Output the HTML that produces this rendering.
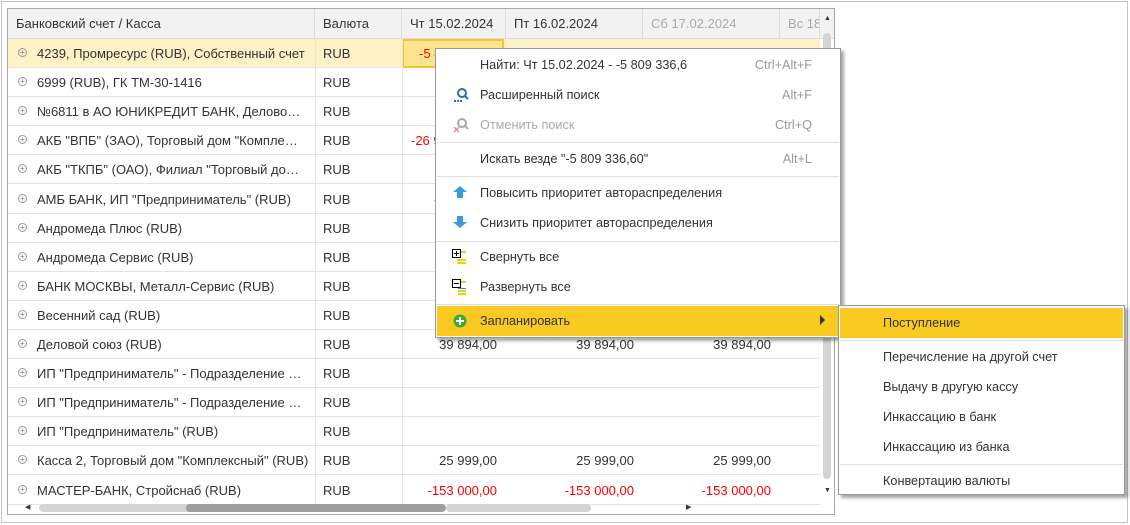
<!DOCTYPE html>
<html><head><meta charset="utf-8"><style>
*{box-sizing:border-box;margin:0;padding:0}
body{width:1130px;height:525px;background:#fff;font-family:"Liberation Sans",sans-serif;font-size:13px;color:#333;position:relative;overflow:hidden}
.abs{position:absolute}
.outer{left:1px;top:1px;width:1127px;height:522px;border:1px solid #c4c4c4}
.tbl{left:7px;top:8px;width:828px;height:507px;border:1px solid #a8a8a8;overflow:hidden;background:#fff}
.hdr{left:0;top:0;height:30px;width:826px;background:#f2f2f2;border-bottom:1px solid #ddd}
.hc{position:absolute;top:0;height:30px;line-height:29px;padding-left:8px;border-right:1px solid #ddd;white-space:nowrap;overflow:hidden}
.row{position:absolute;left:0;width:812px;height:29px;border-bottom:1px solid #e4e4e4}
.c{position:absolute;top:0;height:29px;line-height:29px;white-space:nowrap;overflow:hidden}
.vl{position:absolute;top:30px;width:1px;height:467px;background:#e4e4e4}
.n{text-align:right;width:100px}
.red{color:#f00}
.pl{position:absolute;left:10px;top:9px;width:9px;height:9px;border:1px solid #999;border-radius:50%;font-size:8px;line-height:7px;text-align:center;color:#777}
.menu{background:#fff;border:1px solid #9a9a9a;box-shadow:3px 3px 3px rgba(0,0,0,.35);font-size:12.7px}
.mi{position:absolute;left:0;height:30px;line-height:30px;white-space:nowrap}
.sep{position:absolute;height:1px;background:#ddd}
.sc{position:absolute;color:#999}
</style></head><body>
<div class="abs outer"></div>
<div class="abs tbl">
 <div class="abs hdr">
  <div class="hc" style="left:0;width:307px">Банковский счет / Касса</div>
  <div class="hc" style="left:307px;width:87px">Валюта</div>
  <div class="hc" style="left:394px;width:104px">Чт 15.02.2024</div>
  <div class="hc" style="left:498px;width:137px">Пт 16.02.2024</div>
  <div class="hc" style="left:635px;width:137px;color:#aaa">Сб 17.02.2024</div>
  <div class="hc" style="left:772px;width:40px;color:#aaa">Вс 18.02.2024</div>
 </div>
 <div id="rows"></div>
 <div class="vl" style="left:307px"></div><div class="vl" style="left:394px"></div>
 <div class="abs" style="left:816px;top:6px;font-size:7px;color:#333">▲</div>
 <div class="abs" style="left:815px;top:24px;width:8px;height:446px;background:#d4d4d4;border-radius:4px"></div>
 <div class="abs" style="left:816px;top:478px;font-size:7px;color:#333">▼</div>
 <div class="abs" style="left:17px;top:494px;font-size:7px;color:#333">◀</div>
 <div class="abs" style="left:31px;top:495px;width:260px;height:8px;background:#d4d4d4;border-radius:4px"></div>
 <div class="abs" style="left:178px;top:495px;width:260px;height:8px;background:#9e9e9e;border-radius:4px"></div>
 <div class="abs" style="left:438px;top:495px;width:145px;height:8px;background:#d4d4d4;border-radius:4px"></div>
 <div class="abs" style="left:678px;top:494px;font-size:7px;color:#333">▶</div>
</div>

<div class="abs menu" style="left:435px;top:48px;width:406px;height:290px">
 <div class="mi" style="top:1px;left:44px">Найти: Чт 15.02.2024 - -5 809 336,6</div><div class="sc" style="top:9px;right:28px">Ctrl+Alt+F</div>
 <svg class="abs" style="left:17px;top:38px" width="16" height="16"><circle cx="9" cy="6" r="4" fill="none" stroke="#2f6ea8" stroke-width="2"/><line x1="12" y1="9" x2="15" y2="12" stroke="#2f6ea8" stroke-width="2"/><rect x="1" y="13" width="2" height="2" fill="#2f6ea8"/><rect x="4" y="13" width="2" height="2" fill="#2f6ea8"/><rect x="7" y="13" width="2" height="2" fill="#2f6ea8"/></svg>
 <div class="mi" style="top:31px;left:44px">Расширенный поиск</div><div class="sc" style="top:39px;right:28px">Alt+F</div>
 <svg class="abs" style="left:17px;top:68px" width="16" height="16"><circle cx="9" cy="6" r="4" fill="none" stroke="#aaa" stroke-width="2"/><line x1="12" y1="9" x2="15" y2="12" stroke="#aaa" stroke-width="2"/><path d="M1 10l5 5M6 10l-5 5" stroke="#c99" stroke-width="1.5"/></svg>
 <div class="mi" style="top:61px;left:44px;color:#aaa">Отменить поиск</div><div class="sc" style="top:69px;right:28px">Ctrl+Q</div>
 <div class="sep" style="top:93px;left:1px;width:402px"></div>
 <div class="mi" style="top:95px;left:44px">Искать везде "-5 809 336,60"</div><div class="sc" style="top:103px;right:28px">Alt+L</div>
 <div class="sep" style="top:127px;left:1px;width:402px"></div>
 <svg class="abs" style="left:16px;top:136px" width="16" height="14"><path d="M8 1L15 7H11V13H5V7H1Z" fill="#3d9ae0"/></svg>
 <div class="mi" style="top:129px;left:44px">Повысить приоритет автораспределения</div>
 <svg class="abs" style="left:16px;top:166px" width="16" height="14"><path d="M5 1H11V7H15L8 13L1 7H5Z" fill="#3d9ae0"/></svg>
 <div class="mi" style="top:159px;left:44px">Снизить приоритет автораспределения</div>
 <div class="sep" style="top:192px;left:1px;width:402px"></div>
 <svg class="abs" style="left:16px;top:200px" width="16" height="16"><rect x="0.5" y="0.5" width="8" height="8" fill="#fff" stroke="#000"/><path d="M2 4.5h5M4.5 2v5" stroke="#000"/><rect x="9" y="2" width="5" height="2" fill="#e8d800"/><rect x="5" y="10" width="9" height="2" fill="#e8d800"/><rect x="5" y="13" width="9" height="2" fill="#e8d800"/></svg>
 <div class="mi" style="top:193px;left:44px">Свернуть все</div>
 <svg class="abs" style="left:16px;top:230px" width="16" height="16"><rect x="0.5" y="0.5" width="8" height="8" fill="#fff" stroke="#000"/><path d="M2 4.5h5" stroke="#000"/><rect x="9" y="2" width="5" height="2" fill="#e8d800"/><rect x="6" y="9" width="8" height="1" fill="#3a8ad0"/><rect x="6" y="11" width="8" height="2" fill="#e8d800"/><rect x="6" y="14" width="8" height="2" fill="#e8d800"/></svg>
 <div class="mi" style="top:223px;left:44px">Развернуть все</div>
 <div class="sep" style="top:255px;left:1px;width:402px"></div>
 <div class="abs" style="left:1px;top:257px;width:403px;height:30px;background:#f8ca22"></div>
 <svg class="abs" style="left:17px;top:265px" width="14" height="14"><circle cx="7" cy="7" r="6.5" fill="#3cab3c"/><path d="M7 3v8M3 7h8" stroke="#fff" stroke-width="2"/></svg>
 <div class="mi" style="top:257px;left:44px">Запланировать</div>
 <div class="abs" style="left:384px;top:266px;width:0;height:0;border-left:5px solid #333;border-top:5px solid transparent;border-bottom:5px solid transparent"></div>
</div>

<div class="abs menu" style="left:838px;top:305px;width:287px;height:190px">
 <div class="abs" style="left:1px;top:2px;width:283px;height:30px;background:#f8ca22"></div>
 <div class="mi" style="top:2px;left:44px">Поступление</div>
 <div class="sep" style="top:34px;left:1px;width:283px"></div>
 <div class="mi" style="top:36px;left:44px">Перечисление на другой счет</div>
 <div class="mi" style="top:66px;left:44px">Выдачу в другую кассу</div>
 <div class="mi" style="top:96px;left:44px">Инкассацию в банк</div>
 <div class="mi" style="top:126px;left:44px">Инкассацию из банка</div>
 <div class="sep" style="top:158px;left:1px;width:283px"></div>
 <div class="mi" style="top:160px;left:44px">Конвертацию валюты</div>
</div>

<script>
var names=['4239, Промресурс (RUB), Собственный счет','6999 (RUB), ГК ТМ-30-1416','№6811 в АО ЮНИКРЕДИТ БАНК, Делово…','АКБ "ВПБ" (ЗАО), Торговый дом "Компле…','АКБ "ТКПБ" (ОАО), Филиал "Торговый до…','АМБ БАНК, ИП "Предприниматель" (RUB)','Андромеда Плюс (RUB)','Андромеда Сервис (RUB)','БАНК МОСКВЫ, Металл-Сервис (RUB)','Весенний сад (RUB)','Деловой союз (RUB)','ИП "Предприниматель" - Подразделение …','ИП "Предприниматель" - Подразделение …','ИП "Предприниматель" (RUB)','Касса 2, Торговый дом "Комплексный" (RUB)','МАСТЕР-БАНК, Стройснаб (RUB)'];
var vals={2:['4',''],3:['-26 9','red'],5:['-','red'],10:['39 894,00',''],14:['25 999,00',''],15:['-153 000,00','red']};
var h='';
names.forEach(function(n,i){
 var top=30+Math.round(i*29.1);
 h+='<div class="row" style="top:'+top+'px;'+(i==0?'background:#fdf1c6;':'')+'">';
 h+='<div class="pl">+</div><div class="c" style="left:29px;width:278px">'+n+'</div><div class="c" style="left:315px">RUB</div>';
 if(i==0)h+='<div class="abs" style="left:394px;top:0;width:102px;height:29px;background:#fde48f;border:2px solid #f5c531"></div><div class="c red" style="left:411px">-5 8</div>';
 var v=vals[i];
 if(v){
  if(i==2)h+='<div class="c" style="left:432px">4</div>';
  else if(i==3)h+='<div class="c red" style="left:403px">-26 9</div>';
  else if(i==5)h+='<div class="c red" style="left:426px">-</div>';
  else{[389,526,663].forEach(function(x){h+='<div class="c n '+v[1]+'" style="left:'+x+'px">'+v[0]+'</div>'});}
 }
 h+='</div>';
});
document.getElementById('rows').innerHTML=h;
</script>
</body></html>
